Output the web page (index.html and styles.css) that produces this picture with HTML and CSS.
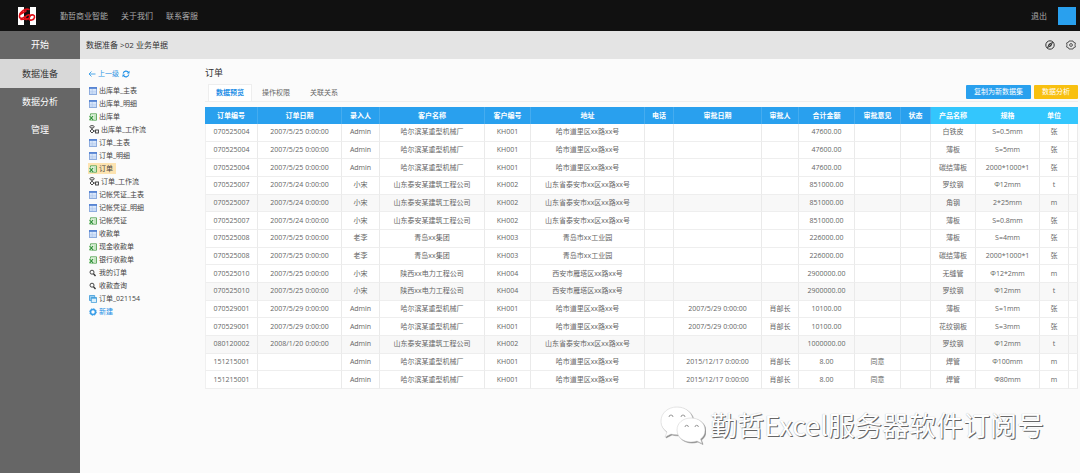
FILE: index.html
```html
<!DOCTYPE html>
<html lang="zh-CN">
<head>
<meta charset="utf-8">
<meta name="viewport" content="width=device-width, initial-scale=1">
<title>订单 - 勤哲商业智能</title>
<link rel="stylesheet" href="styles.css">
</head>
<body>
<svg class="sprite" aria-hidden="true">
  <symbol id="i-table" viewBox="0 0 8 8"><rect x=".5" y=".5" width="7" height="7" fill="#dce9fb" stroke="#8fadde"/><path d="M0 1h8" stroke="#4a7bd0" stroke-width="1.6"/><path d="M1 4.3h6M1 6h6M3.2 2v5" stroke="#a9c3ea" stroke-width=".6"/></symbol>
  <symbol id="i-excel" viewBox="0 0 8 8"><path d="M1.5.8h6v6.4h-6z" fill="#eef8ea" stroke="#58a557" stroke-width=".9"/><path d="M0 2.4h4.6v5H0z" fill="#d5efd0"/><path d="M.6 3l3.6 4.2M4 3L.6 7.2" stroke="#2f8f3a" stroke-width="1.1"/><path d="M5 5h2M5 3h2" stroke="#7cc07a" stroke-width=".7"/></symbol>
  <symbol id="i-flow" viewBox="0 0 10 9"><g fill="none" stroke="#333" stroke-width=".9"><ellipse cx="3" cy="1.8" rx="2.2" ry="1.2"/><path d="M3 3v1.2M3 4.2L1 6l2 2 2-2zM5 6h1.4"/><rect x="6.6" y="5" width="2.8" height="3"/></g></symbol>
  <symbol id="i-search" viewBox="0 0 8 8"><circle cx="3" cy="3.2" r="2" fill="none" stroke="#333" stroke-width=".9"/><path d="M4.500 4.800L6.500 7" stroke="#333" stroke-width="1.300"/></symbol>
  <symbol id="i-copy" viewBox="0 0 8 8"><path d="M.5.5h5.2v5H.5z" fill="#9bd0f2" stroke="#3d9bd8" stroke-width=".8"/><path d="M2.3 2.6h5.2v5H2.3z" fill="#d9effc" stroke="#3d9bd8" stroke-width=".8"/><path d="M2.3 3h5.2" stroke="#3d9bd8" stroke-width="1.2"/></symbol>
  <symbol id="i-add" viewBox="0 0 8 8"><circle cx="4" cy="4" r="2.500" fill="#fff" stroke="#3a9ee8" stroke-width="1.600"/><circle cx="4" cy="4" r="3.300" fill="none" stroke="#3a9ee8" stroke-dasharray="1.300 1.290"/></symbol>
</svg>

<header class="topbar">
  <a class="logo" href="#" aria-label="首页">
    <svg viewBox="0 0 20 20"><path d="M1 1h6v18H1zM13 1h6v18h-6z" fill="#fff"/><path d="M12 3.500C8 2 3 6 2.500 9.500S5 13 8 10.500M3 8.500l6-3.500M8 12c2-4 6-4 5-1.500s-5 4.500-5 1.500M4 13.500l8-1M12.500 10c3-2 5.500-1 5 1.500s-5 4-5.500 1" fill="none" stroke="#e00d16" stroke-width="1.600" stroke-linecap="round"/></svg>
  </a>
  <nav class="topnav">
    <a href="#">勤哲商业智能</a>
    <a href="#">关于我们</a>
    <a href="#">联系客服</a>
  </nav>
  <a class="logout" href="#">退出</a>
  <button class="avatar" type="button" aria-label="用户"></button>
</header>

<div class="shell">
  <nav class="sidebar">
    <a href="#">开始</a>
    <a class="active" href="#">数据准备</a>
    <a href="#">数据分析</a>
    <a href="#">管理</a>
  </nav>
  <div class="workspace">
    <div class="crumbs">
      <span>数据准备 &gt;02 业务单据</span>
      <div class="tools">
        <button type="button" aria-label="导航"><svg viewBox="0 0 10 10"><circle cx="5" cy="5" r="4.200" fill="none" stroke="#333"/><path d="M8.200 1.800L6.200 6.200 1.800 8.200 3.800 3.800z" fill="#333"/><path d="M3.500 6.500l3-3" stroke="#e4e4e4" stroke-width=".5"/></svg></button>
        <button type="button" aria-label="设置"><svg viewBox="0 0 10 10"><path d="M3 1h4l.6 1.300 1.700.6V4.200L8.700 5l.6.800v1.300l-1.700.6L7 9H3l-.6-1.300-1.700-.6V5.800L1.300 5l-.6-.8V2.900l1.700-.6z" fill="none" stroke="#444" stroke-width=".9"/><circle cx="5" cy="5" r="1.400" fill="none" stroke="#444" stroke-width=".9"/></svg></button>
      </div>
    </div>
    <div class="content">
      <aside class="tree">
        <div class="up">
          <a href="#"><svg viewBox="0 0 8 8"><path d="M7.500 4H1M3.500 1.500L1 4l2.500 2.500" fill="none" stroke="#3a9ee8" stroke-width=".9"/></svg>上一级</a>
          <button type="button" aria-label="刷新"><svg viewBox="0 0 8 8"><path d="M1.200 3.500A2.900 2.900 0 0 1 6.500 2.500M6.800 4.500A2.900 2.900 0 0 1 1.500 5.500" fill="none" stroke="#1e8fe6" stroke-width="1.200"/><path d="M7.500.8v2.700H4.800zM.5 7.200V4.500h2.700z" fill="#1e8fe6"/></svg></button>
        </div>
        <ul>
          <li><a href="#"><svg><use href="#i-table"/></svg>出库单_主表</a></li>
          <li><a href="#"><svg><use href="#i-table"/></svg>出库单_明细</a></li>
          <li><a href="#"><svg><use href="#i-excel"/></svg>出库单</a></li>
          <li><a href="#"><svg class="wide"><use href="#i-flow"/></svg>出库单_工作流</a></li>
          <li><a href="#"><svg><use href="#i-table"/></svg>订单_主表</a></li>
          <li><a href="#"><svg><use href="#i-table"/></svg>订单_明细</a></li>
          <li><a class="current" href="#"><svg><use href="#i-excel"/></svg>订单</a></li>
          <li><a href="#"><svg class="wide"><use href="#i-flow"/></svg>订单_工作流</a></li>
          <li><a href="#"><svg><use href="#i-table"/></svg>记帐凭证_主表</a></li>
          <li><a href="#"><svg><use href="#i-table"/></svg>记帐凭证_明细</a></li>
          <li><a href="#"><svg><use href="#i-excel"/></svg>记帐凭证</a></li>
          <li><a href="#"><svg><use href="#i-table"/></svg>收款单</a></li>
          <li><a href="#"><svg><use href="#i-excel"/></svg>现金收款单</a></li>
          <li><a href="#"><svg><use href="#i-excel"/></svg>银行收款单</a></li>
          <li><a href="#"><svg><use href="#i-search"/></svg>我的订单</a></li>
          <li><a href="#"><svg><use href="#i-search"/></svg>收款查询</a></li>
          <li><a href="#"><svg><use href="#i-copy"/></svg>订单_021154</a></li>
          <li><a class="new" href="#"><svg><use href="#i-add"/></svg>新建</a></li>
        </ul>
      </aside>
      <main class="main">
        <h1>订单</h1>
        <div class="tabrow">
          <div class="tabs">
            <button class="active" type="button">数据预览</button>
            <button type="button">操作权限</button>
            <button type="button">关联关系</button>
          </div>
          <div class="actions">
            <button class="copy" type="button">复制为新数据集</button>
            <button class="analyse" type="button">数据分析</button>
          </div>
        </div>
        <table class="grid">
          <colgroup><col class="w53"><col class="w84"><col class="w38"><col class="w105"><col class="w46"><col class="w114"><col class="w29"><col class="w88"><col class="w37"><col class="w56"><col class="w46"><col class="w30"><col class="w45"><col class="w64"><col class="w29"><col class="w9"></colgroup>
          <thead><tr><th>订单编号<th>订单日期<th>录入人<th>客户名称<th>客户编号<th>地址<th>电话<th>审批日期<th>审批人<th>合计金额<th>审批意见<th>状态<th class="detail">产品名称<th class="detail">规格<th class="detail">单位<th class="detail"></tr></thead>
          <tbody>
            <tr><td>070525004<td>2007/5/25 0:00:00<td>Admin<td>哈尔滨某重型机械厂<td>KH001<td>哈市道里区xx路xx号<td><td><td><td>47600.00<td><td><td>白铁皮<td>S=0.5mm<td>张<td></tr>
            <tr><td>070525004<td>2007/5/25 0:00:00<td>Admin<td>哈尔滨某重型机械厂<td>KH001<td>哈市道里区xx路xx号<td><td><td><td>47600.00<td><td><td>薄板<td>S=5mm<td>张<td></tr>
            <tr><td>070525004<td>2007/5/25 0:00:00<td>Admin<td>哈尔滨某重型机械厂<td>KH001<td>哈市道里区xx路xx号<td><td><td><td>47600.00<td><td><td>碳结薄板<td>2000*1000*1<td>张<td></tr>
            <tr><td>070525007<td>2007/5/24 0:00:00<td>小宋<td>山东泰安某建筑工程公司<td>KH002<td>山东省泰安市xx区xx路xx号<td><td><td><td>851000.00<td><td><td>罗纹钢<td>Φ12mm<td>t<td></tr>
            <tr class="shade"><td>070525007<td>2007/5/24 0:00:00<td>小宋<td>山东泰安某建筑工程公司<td>KH002<td>山东省泰安市xx区xx路xx号<td><td><td><td>851000.00<td><td><td>角钢<td>2*25mm<td>m<td></tr>
            <tr><td>070525007<td>2007/5/24 0:00:00<td>小宋<td>山东泰安某建筑工程公司<td>KH002<td>山东省泰安市xx区xx路xx号<td><td><td><td>851000.00<td><td><td>薄板<td>S=0.8mm<td>张<td></tr>
            <tr><td>070525008<td>2007/5/25 0:00:00<td>老李<td>青岛xx集团<td>KH003<td>青岛市xx工业园<td><td><td><td>226000.00<td><td><td>薄板<td>S=4mm<td>张<td></tr>
            <tr><td>070525008<td>2007/5/25 0:00:00<td>老李<td>青岛xx集团<td>KH003<td>青岛市xx工业园<td><td><td><td>226000.00<td><td><td>碳结薄板<td>2000*1000*1<td>张<td></tr>
            <tr><td>070525010<td>2007/5/25 0:00:00<td>小宋<td>陕西xx电力工程公司<td>KH004<td>西安市雁塔区xx路xx号<td><td><td><td>2900000.00<td><td><td>无缝管<td>Φ12*2mm<td>m<td></tr>
            <tr class="shade"><td>070525010<td>2007/5/25 0:00:00<td>小宋<td>陕西xx电力工程公司<td>KH004<td>西安市雁塔区xx路xx号<td><td><td><td>2900000.00<td><td><td>罗纹钢<td>Φ12mm<td>t<td></tr>
            <tr><td>070529001<td>2007/5/29 0:00:00<td>Admin<td>哈尔滨某重型机械厂<td>KH001<td>哈市道里区xx路xx号<td><td>2007/5/29 0:00:00<td>肖部长<td>10100.00<td><td><td>薄板<td>S=1mm<td>张<td></tr>
            <tr><td>070529001<td>2007/5/29 0:00:00<td>Admin<td>哈尔滨某重型机械厂<td>KH001<td>哈市道里区xx路xx号<td><td>2007/5/29 0:00:00<td>肖部长<td>10100.00<td><td><td>花纹钢板<td>S=3mm<td>张<td></tr>
            <tr class="shade"><td>080120002<td>2008/1/20 0:00:00<td>Admin<td>山东泰安某建筑工程公司<td>KH002<td>山东省泰安市xx区xx路xx号<td><td><td><td>1000000.00<td><td><td>罗纹钢<td>Φ12mm<td>t<td></tr>
            <tr><td>151215001<td><td>Admin<td>哈尔滨某重型机械厂<td>KH001<td>哈市道里区xx路xx号<td><td>2015/12/17 0:00:00<td>肖部长<td>8.00<td>同意<td><td>焊管<td>Φ100mm<td>m<td></tr>
            <tr><td>151215001<td><td>Admin<td>哈尔滨某重型机械厂<td>KH001<td>哈市道里区xx路xx号<td><td>2015/12/17 0:00:00<td>肖部长<td>8.00<td>同意<td><td>焊管<td>Φ80mm<td>m<td></tr>
          </tbody>
        </table>
      </main>
    </div>
  </div>
</div>

<div class="watermark">
  <svg viewBox="0 0 46 40" aria-hidden="true"><g class="bubble"><path d="M17 2C8 2 1 8 1 16c0 5 2 8 6 11l-2 5 6-3c2 .6 4 .8 6 .8C26 30 33 24 33 16S26 2 17 2z"/></g><g class="bubble"><path d="M31 13c-8 0-14 5-14 12s6 12 14 12c2 0 4-.4 6-1l5 2.500-1.500-4.500c3-2 4.500-5 4.500-9 0-7-6-12-14-12z"/></g><g class="eyes"><path d="M9 12a2 2 0 0 1 4 0M21 12a2 2 0 0 1 4 0M25 22a1.700 1.700 0 0 1 3.400 0M35 22a1.700 1.700 0 0 1 3.400 0"/></g></svg>
  <span>勤哲Excel服务器软件订阅号</span>
</div>
</body>
</html>
```

FILE: styles.css
```css
* { box-sizing: border-box; }

body {
  margin: 0;
  min-height: 100vh;
  display: flex;
  flex-direction: column;
  background: #fbfbfb;
  color: #444;
  font: 7px/10px "Open Sans", "Noto Sans CJK SC", sans-serif;
}

a { color: inherit; text-decoration: none; }
button { padding: 0; border: 0; background: none; color: inherit; font: inherit; }
svg { display: block; }
.sprite { position: absolute; width: 0; height: 0; }

.topbar {
  display: flex;
  align-items: center;
  height: 31px;
  padding: 0 4px 0 17px;
  background: #111;
  color: #aaa;
  font-size: 8px;
}
.logo svg { width: 20px; height: 20px; }
.topnav { display: flex; gap: 13px; margin-left: 23px; }
.logout { margin-left: auto; }
.avatar { width: 18px; height: 18px; margin-left: 11px; background: #29a0ee; }

.shell { flex: 1; display: flex; }
.sidebar { width: 80px; background: #666; }
.sidebar a {
  display: block;
  color: #fff;
  font-size: 9px;
  line-height: 28px;
  text-align: center;
}
.sidebar .active { background: #d8d8d8; color: #333; line-height: 29px; }

.workspace { flex: 1; min-width: 0; }
.crumbs {
  display: flex;
  align-items: center;
  justify-content: space-between;
  height: 28px;
  padding: 0 4px 0 6px;
  background: #e4e4e4;
  color: #333;
  font-size: 8px;
}
.tools { display: flex; gap: 11px; }
.tools svg { width: 10px; height: 10px; }

.content { display: flex; padding: 9px 2px 0 8px; }
.tree { width: 117px; padding-top: 1px; color: #444; }
.tree svg { width: 8px; height: 8px; flex: none; }
.up { display: flex; align-items: center; gap: 3px; height: 10px; color: #2f96e4; }
.up a { display: flex; align-items: center; gap: 2px; }
.tree ul { margin: 0; padding: 5px 0 0; list-style: none; }
.tree li { display: flex; align-items: center; height: 13px; }
.tree li a { display: flex; align-items: center; gap: 2px; height: 11px; padding: 0 3px 0 1px; }
.tree svg.wide { width: 10px; height: 9px; }
.tree .current { background: #fde3b0; }
.tree .new { color: #1e8fe6; }

.main { flex: 1; min-width: 0; }
h1 { margin: 0; font-size: 9px; font-weight: 400; line-height: 10px; color: #333; }
.tabrow {
  display: flex;
  align-items: flex-end;
  justify-content: space-between;
  height: 24px;
  margin-bottom: 5px;
  border-bottom: 1px solid #eee;
}
.tabs { display: flex; padding-left: 3px; }
.tabs button { height: 17px; padding: 0 10px; color: #666; }
.tabs .active {
  padding: 0 7px;
  background: #fff;
  border: 1px solid #eee;
  border-bottom: 0;
  color: #1e8fe6;
  font-weight: 700;
}
.actions { display: flex; gap: 3px; padding-bottom: 2px; }
.actions button { height: 14px; border-radius: 1px; color: #fff; }
.copy { width: 65px; }
.analyse { width: 44px; }
.actions .copy { background: #29a0ee; }
.actions .analyse { background: #f8c010; }

.grid {
  width: 100%;
  height: 282px;
  table-layout: fixed;
  border-collapse: separate;
  border-spacing: 0;
  background: #fff;
  color: #666;
  text-align: center;
}
.grid th, .grid td {
  height: 17px;
  padding: 0;
  border-right: 1px solid #eaeaea;
  white-space: nowrap;
}
.grid td { border-bottom: 1px solid #eee; }
.grid td:first-child { border-left: 1px solid #f0f0f0; }
.grid th { background: #29a0ee; border-color: #45acef; color: #fff; font-weight: 700; }
.grid th.detail { background: #33c6fd; border-color: #33c6fd; }
.shade { background: #f8f8f8; }
.w9 { width: 9px; }
.w29 { width: 29px; }
.w30 { width: 30px; }
.w37 { width: 37px; }
.w38 { width: 38px; }
.w45 { width: 45px; }
.w46 { width: 46px; }
.w53 { width: 53px; }
.w56 { width: 56px; }
.w64 { width: 64px; }
.w84 { width: 84px; }
.w88 { width: 88px; }
.w105 { width: 105px; }
.w114 { width: 114px; }

.watermark {
  position: absolute;
  right: 36px;
  bottom: 28px;
  display: flex;
  align-items: center;
  gap: 4px;
  color: #fff;
  font: 27px/40px "Noto Sans CJK SC", sans-serif;
  text-shadow: 1px 1px 0 #666, 0 0 1px #aaa;
}
.watermark svg { width: 46px; height: 40px; }
.watermark .bubble { fill: #fff; stroke: #ccc; stroke-width: .5; filter: drop-shadow(1px 1px 0 #888); }
.watermark .eyes { fill: none; stroke: #999; }
```
